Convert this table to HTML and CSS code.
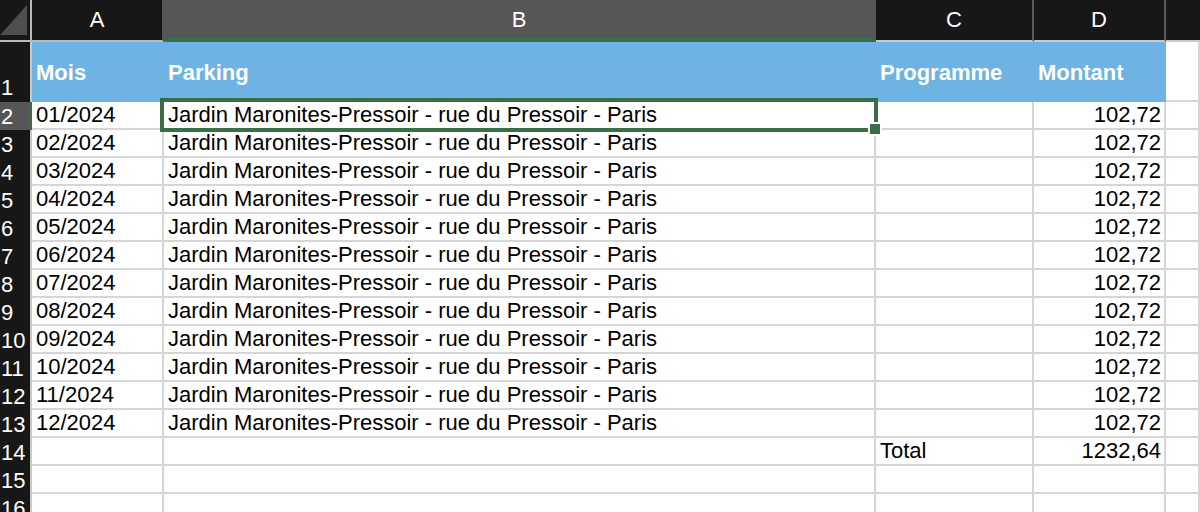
FILE: index.html
```html
<!DOCTYPE html>
<html lang="fr">
<head>
<meta charset="utf-8">
<title>Feuille</title>
<link rel="stylesheet" href="styles.css">
</head>
<body>
<div class="sheet">
  <div class="grid">
    <div class="ch corner"><svg width="30" height="40" viewBox="0 0 30 40"><polygon points="0,35 27,5 27,35" fill="#4e4e4e"/></svg></div>
    <div class="ch ch-a">A</div>
    <div class="ch ch-b">B</div>
    <div class="ch">C</div>
    <div class="ch">D</div>
    <div class="ch ch-e"></div>

    <div class="rh rh-1">1</div>
    <div class="c hd">Mois</div>
    <div class="c hd">Parking</div>
    <div class="c hd">Programme</div>
    <div class="c hd">Montant</div>
    <div class="c hd-e"></div>

    <div class="rh sel">2</div><div class="c">01/2024</div><div class="c">Jardin Maronites-Pressoir - rue du Pressoir - Paris</div><div class="c"></div><div class="c num">102,72</div><div class="c"></div>
    <div class="rh">3</div><div class="c">02/2024</div><div class="c">Jardin Maronites-Pressoir - rue du Pressoir - Paris</div><div class="c"></div><div class="c num">102,72</div><div class="c"></div>
    <div class="rh">4</div><div class="c">03/2024</div><div class="c">Jardin Maronites-Pressoir - rue du Pressoir - Paris</div><div class="c"></div><div class="c num">102,72</div><div class="c"></div>
    <div class="rh">5</div><div class="c">04/2024</div><div class="c">Jardin Maronites-Pressoir - rue du Pressoir - Paris</div><div class="c"></div><div class="c num">102,72</div><div class="c"></div>
    <div class="rh">6</div><div class="c">05/2024</div><div class="c">Jardin Maronites-Pressoir - rue du Pressoir - Paris</div><div class="c"></div><div class="c num">102,72</div><div class="c"></div>
    <div class="rh">7</div><div class="c">06/2024</div><div class="c">Jardin Maronites-Pressoir - rue du Pressoir - Paris</div><div class="c"></div><div class="c num">102,72</div><div class="c"></div>
    <div class="rh">8</div><div class="c">07/2024</div><div class="c">Jardin Maronites-Pressoir - rue du Pressoir - Paris</div><div class="c"></div><div class="c num">102,72</div><div class="c"></div>
    <div class="rh">9</div><div class="c">08/2024</div><div class="c">Jardin Maronites-Pressoir - rue du Pressoir - Paris</div><div class="c"></div><div class="c num">102,72</div><div class="c"></div>
    <div class="rh">10</div><div class="c">09/2024</div><div class="c">Jardin Maronites-Pressoir - rue du Pressoir - Paris</div><div class="c"></div><div class="c num">102,72</div><div class="c"></div>
    <div class="rh">11</div><div class="c">10/2024</div><div class="c">Jardin Maronites-Pressoir - rue du Pressoir - Paris</div><div class="c"></div><div class="c num">102,72</div><div class="c"></div>
    <div class="rh">12</div><div class="c">11/2024</div><div class="c">Jardin Maronites-Pressoir - rue du Pressoir - Paris</div><div class="c"></div><div class="c num">102,72</div><div class="c"></div>
    <div class="rh">13</div><div class="c">12/2024</div><div class="c">Jardin Maronites-Pressoir - rue du Pressoir - Paris</div><div class="c"></div><div class="c num">102,72</div><div class="c"></div>
    <div class="rh">14</div><div class="c"></div><div class="c"></div><div class="c">Total</div><div class="c num">1232,64</div><div class="c"></div>
    <div class="rh">15</div><div class="c"></div><div class="c"></div><div class="c"></div><div class="c"></div><div class="c"></div>
    <div class="rh">16</div><div class="c"></div><div class="c"></div><div class="c"></div><div class="c"></div><div class="c"></div>
  </div>
  <div class="selection"><span class="handle"></span></div>
</div>
</body>
</html>
```

FILE: styles.css
```css
html, body {
  margin: 0;
  padding: 0;
  background: #ffffff;
  overflow: hidden;
}

.sheet {
  position: relative;
  width: 1200px;
  height: 512px;
  overflow: hidden;
  font-family: "Liberation Sans", Arial, sans-serif;
  font-size: 22px;
  color: #000;
}

.grid {
  display: grid;
  grid-template-columns: 32px 132px 712px 158px 132px 1fr;
  grid-template-rows: 42px 60px repeat(15, 28px);
}

.ch {
  box-sizing: border-box;
  background: #171717;
  color: #ffffff;
  text-align: center;
  line-height: 40px;
  border-right: 2px solid #5a5a5a;
  border-bottom: 2px solid #c9c9c9;
  overflow: hidden;
}

.corner {
  border-right-color: #b9b9b9;
  border-bottom-color: #b9b9b9;
}

.corner svg {
  display: block;
}

.ch-a {
  border-right-color: #565656;
  border-bottom-color: #b9b9b9;
}

.ch-b {
  background: #565656;
  border-right-color: #565656;
  border-bottom-color: #3a6e47;
  box-shadow: inset 0 -2px 0 #3a6e47;
}

.ch-e {
  border-right: none;
}

.rh {
  box-sizing: border-box;
  background: #171717;
  color: #ffffff;
  border-right: 2px solid #c9c9c9;
  padding-left: 1px;
  display: flex;
  align-items: flex-end;
  line-height: 26px;
  white-space: nowrap;
  overflow: visible;
}

.rh.sel {
  background: #565656;
  border-right-color: #3a6e47;
  box-shadow: inset -1px 0 0 #3a6e47;
}

.rh-1 {
  padding-bottom: 1px;
}

.c {
  box-sizing: border-box;
  border-right: 2px solid #d6d6d6;
  border-bottom: 2px solid #d6d6d6;
  padding: 0 3px 0 4px;
  line-height: 26px;
  white-space: nowrap;
  overflow: hidden;
  display: flex;
  align-items: flex-end;
}

.c.num {
  justify-content: flex-end;
}

.c.hd {
  background: #6db3e3;
  border-color: #6db3e3;
  color: #ffffff;
  font-weight: bold;
  align-items: center;
  padding-top: 3px;
  padding-left: 4px;
}

.hd-e {
  box-sizing: border-box;
  border-bottom: 2px solid #d6d6d6;
}

.selection {
  position: absolute;
  left: 160px;
  top: 98px;
  width: 718px;
  height: 34px;
  box-sizing: border-box;
  border: 4px solid #3a6e47;
  pointer-events: none;
}

.handle {
  position: absolute;
  right: -6px;
  bottom: -6px;
  width: 10px;
  height: 10px;
  background: #3a6e47;
  box-shadow: 0 0 0 2px #ffffff;
}
```
